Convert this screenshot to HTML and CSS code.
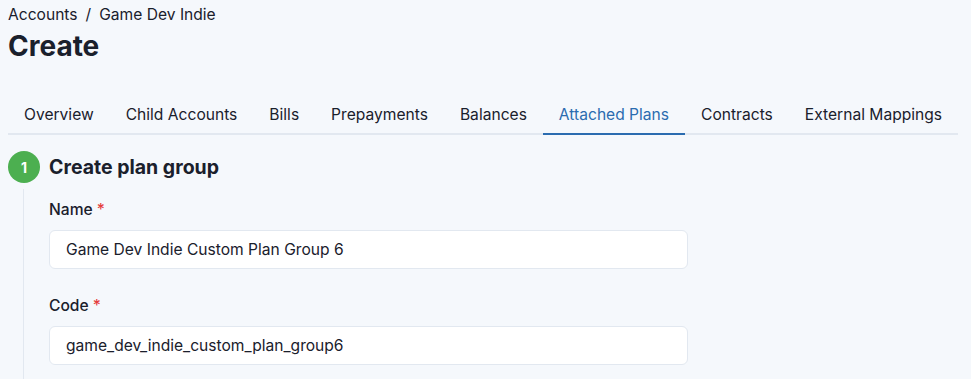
FILE: index.html
```html
<!DOCTYPE html>
<html lang="en">
<head>
    <meta charset="UTF-8">
    <meta name="viewport" content="width=device-width, initial-scale=1.0">
    <title>Create</title>
    <link rel="stylesheet" href="styles.css">
</head>
<body>
    <div class="page">
        <div class="crumbs">
            <a href="#">Accounts</a>
            <span class="sep">/</span>
            <a href="#">Game Dev Indie</a>
        </div>
        <h1>Create</h1>

        <div class="tabs">
            <a href="#" class="tab">Overview</a>
            <a href="#" class="tab">Child Accounts</a>
            <a href="#" class="tab">Bills</a>
            <a href="#" class="tab">Prepayments</a>
            <a href="#" class="tab">Balances</a>
            <a href="#" class="tab active">Attached Plans</a>
            <a href="#" class="tab">Contracts</a>
            <a href="#" class="tab">External Mappings</a>
        </div>

        <div class="step">
            <div class="step-head">
                <div class="num">1</div>
                <h2>Create plan group</h2>
            </div>
            <div class="step-body">
                <div class="field">
                    <label for="name">Name <span class="req">*</span></label>
                    <input type="text" id="name" value="Game Dev Indie Custom Plan Group 6">
                </div>
                <div class="field">
                    <label for="code">Code <span class="req">*</span></label>
                    <input type="text" id="code" value="game_dev_indie_custom_plan_group6">
                </div>
            </div>
        </div>
    </div>
</body>
</html>
```

FILE: styles.css
```css
body{
    margin: 0;
    background-color: #f5f8fc;
    color: #1a202c;
    font-family: Inter, 'Noto Sans', sans-serif;
    overflow: hidden;
}
.page{
    padding: 5px 13px 0 8px;
}
.crumbs{
    display: flex;
    gap: 8px;
    font-size: 15.6px;
    line-height: 20px;
}
.crumbs a{
    color: #1a202c;
    text-decoration: none;
}
h1{
    margin: 6px 0 0;
    font-size: 28px;
    line-height: 30px;
    font-weight: 700;
}
.tabs{
    display: flex;
    margin-top: 36px;
    border-bottom: 2px solid #e2e8f0;
}
.tab{
    padding: 8px 16px 8px;
    margin-bottom: -2px;
    font-size: 15.6px;
    line-height: 20px;
    color: #1a202c;
    text-decoration: none;
    border-bottom: 2px solid transparent;
}
.tab.active{
    color: #2b6cb0;
    border-bottom-color: #2b6cb0;
}
.step{
    margin-top: 16px;
}
.step-head{
    display: flex;
    align-items: center;
    gap: 9px;
}
.num{
    width: 32px;
    height: 32px;
    border-radius: 50%;
    background-color: #4caf50;
    color: white;
    font-size: 14px;
    font-weight: 700;
    display: flex;
    justify-content: center;
    align-items: center;
}
h2{
    margin: 0;
    font-size: 19.5px;
    font-weight: 700;
}
.step-body{
    margin: 6px 0 0 15px;
    border-left: 1px solid #e2e8f0;
    padding: 11px 0 20px 25px;
    width: 639px;
}
.field{
    margin-bottom: 27px;
}
label{
    display: block;
    font-size: 15.6px;
    font-weight: 500;
    line-height: 20px;
    margin-bottom: 10px;
}
.req{
    color: #e53e3e;
}
input[type="text"]{
    box-sizing: border-box;
    width: 100%;
    height: 39px;
    padding: 0 16px;
    border: 1px solid #e2e8f0;
    border-radius: 6px;
    background-color: white;
    font-family: inherit;
    font-size: 15.6px;
    color: #1a202c;
}
```
